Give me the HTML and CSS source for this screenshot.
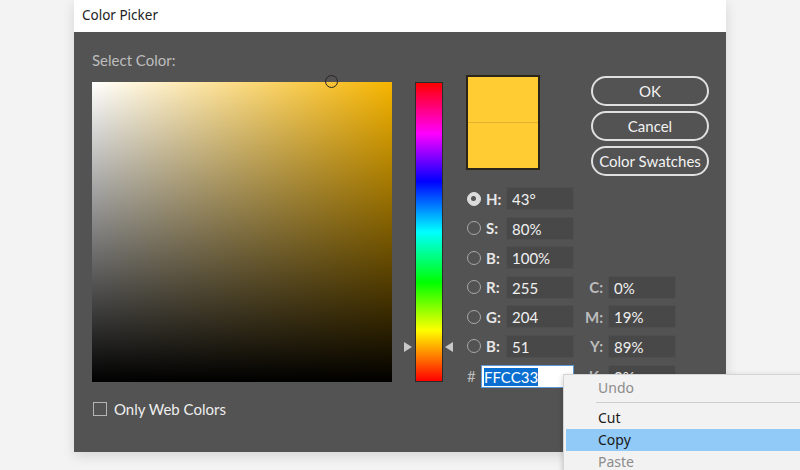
FILE: index.html
```html
<!DOCTYPE html>
<html lang="en">
<head>
    <meta charset="UTF-8">
    <title>Color Picker</title>
    <link rel="stylesheet" href="styles.css">
</head>
<body>
    <div class="dialog">
        <div class="title-bar">Color Picker</div>
        <div class="dialog-body">
            <div class="picker-col">
                <div class="section-label">Select Color:</div>
                <div class="sv-box">
                    <span class="sv-marker"></span>
                </div>
                <label class="web-only">
                    <span class="check"></span>
                    Only Web Colors
                </label>
            </div>
            <div class="hue-col">
                <div class="hue-bar"></div>
                <span class="hue-arrow left"></span>
                <span class="hue-arrow right"></span>
            </div>
            <div class="values-col">
                <div class="top-row">
                    <div class="swatch">
                        <div class="swatch-new"></div>
                        <div class="swatch-old"></div>
                    </div>
                    <div class="button-col">
                        <button class="btn">OK</button>
                        <button class="btn">Cancel</button>
                        <button class="btn">Color Swatches</button>
                    </div>
                </div>
                <div class="fields">
                    <span class="radio checked"></span><span class="field-label">H:</span><span class="field">43°</span><span></span><span></span>
                    <span class="radio"></span><span class="field-label">S:</span><span class="field">80%</span><span></span><span></span>
                    <span class="radio"></span><span class="field-label">B:</span><span class="field">100%</span><span></span><span></span>
                    <span class="radio"></span><span class="field-label">R:</span><span class="field">255</span><span class="cmyk-label">C:</span><span class="field">0%</span>
                    <span class="radio"></span><span class="field-label">G:</span><span class="field">204</span><span class="cmyk-label">M:</span><span class="field">19%</span>
                    <span class="radio"></span><span class="field-label">B:</span><span class="field">51</span><span class="cmyk-label">Y:</span><span class="field">89%</span>
                    <span class="hash">#</span><span class="field hex"><span class="selected">FFCC33</span></span><span class="cmyk-label">K:</span><span class="field">0%</span>
                </div>
            </div>
        </div>
    </div>

    <ul class="context-menu">
        <li class="disabled">Undo</li>
        <li class="separator"></li>
        <li>Cut</li>
        <li class="active">Copy</li>
        <li class="disabled">Paste</li>
    </ul>
</body>
</html>
```

FILE: styles.css
```css
*{
    box-sizing: border-box;
}
body{
    margin: 0;
    height: 470px;
    overflow: hidden;
    position: relative;
    background: #f3f3f3;
    font-family: Lato, "Open Sans", sans-serif;
    font-size: 15px;
}
.dialog{
    width: 652px;
    margin-left: 74px;
    box-shadow: 0 4px 12px rgba(0, 0, 0, 0.12);
}
.title-bar{
    height: 32px;
    line-height: 30px;
    padding-left: 8px;
    background: #fff;
    color: #222;
    font-family: "Noto Sans", sans-serif;
    font-size: 13.5px;
}
.dialog-body{
    display: flex;
    height: 420px;
    padding: 19px 18px 0;
    background: #535353;
    color: #e6e6e6;
}
.section-label{
    height: 18px;
    line-height: 18px;
    margin-bottom: 13px;
    color: #bdbdbd;
}
.sv-box{
    position: relative;
    width: 300px;
    height: 300px;
    background:
        linear-gradient(to top, #000, rgba(0, 0, 0, 0)),
        linear-gradient(to right, #fff, #f7b500);
}
.sv-marker{
    position: absolute;
    left: 233px;
    top: -7px;
    width: 13px;
    height: 13px;
    border: 1.5px solid #2a2420;
    border-radius: 50%;
}
.web-only{
    display: flex;
    align-items: center;
    gap: 7px;
    margin-top: 18px;
    margin-left: 1px;
    color: #eee;
}
.check{
    width: 14px;
    height: 14px;
    border: 1px solid #b5b5b5;
}
.hue-col{
    position: relative;
    margin-left: 23px;
    margin-top: 31px;
}
.hue-bar{
    width: 28px;
    height: 300px;
    border: 1px solid #2b2b2b;
    background: linear-gradient(to bottom,
        #ff0000 0%, #ff00ff 17%, #0000ff 33%, #00ffff 50%,
        #00ff00 67%, #ffff00 83%, #ff0000 100%);
}
.hue-arrow{
    position: absolute;
    top: 260px;
    width: 0;
    height: 0;
    border-top: 5px solid transparent;
    border-bottom: 5px solid transparent;
}
.hue-arrow.left{
    left: -11px;
    border-left: 8px solid #c8c8c8;
}
.hue-arrow.right{
    right: -10px;
    border-right: 8px solid #c8c8c8;
}
.values-col{
    margin-left: 23px;
    margin-top: 24px;
}
.top-row{
    display: flex;
    align-items: flex-start;
    height: 95px;
}
.swatch{
    width: 74px;
    height: 95px;
    border: 2px solid #2b2418;
    background: #ffcc33;
    display: flex;
    flex-direction: column;
}
.swatch-new,
.swatch-old{
    flex: 1;
}
.swatch-new{
    border-bottom: 1px solid #e0b230;
}
.button-col{
    display: flex;
    flex-direction: column;
    gap: 5px;
    margin-left: 51px;
    margin-top: 1px;
}
.btn{
    width: 118px;
    height: 30px;
    padding: 0;
    border: 2px solid #e0e0e0;
    border-radius: 15px;
    background: transparent;
    color: #f2f2f2;
    font-family: inherit;
    font-size: 15px;
}
.fields{
    display: grid;
    grid-template-columns: 18px 22px 68px 34px 68px;
    grid-auto-rows: 23px;
    row-gap: 6.6px;
    align-items: center;
    margin-top: 17px;
}
.radio{
    width: 14px;
    height: 14px;
    margin-left: 1px;
    border: 1.5px solid #a8a8a8;
    border-radius: 50%;
}
.radio.checked{
    background: #dcdcdc;
    border-color: #dcdcdc;
    position: relative;
}
.radio.checked::after{
    content: "";
    position: absolute;
    left: 3px;
    top: 3px;
    width: 5px;
    height: 5px;
    border-radius: 50%;
    background: #555;
}
.field-label{
    padding-left: 2px;
    color: #e8e8e8;
    font-weight: bold;
}
.cmyk-label{
    text-align: right;
    padding-right: 5px;
    color: #bdbdbd;
    font-weight: bold;
}
.field{
    height: 23px;
    line-height: 22px;
    padding-left: 5px;
    background: #484848;
    border: 1px solid #4f4f4f;
    color: #f0f0f0;
}
.hash{
    color: #bdbdbd;
    padding-left: 1px;
}
.field.hex{
    grid-column: 2 / 4;
    margin-left: -3px;
    padding-left: 2px;
    background: #fff;
    border-color: #5a9ad8;
}
.selected{
    background: #0a6fd0;
    color: #fff;
}
.context-menu{
    position: absolute;
    left: 563px;
    top: 374px;
    width: 250px;
    margin: 0;
    padding: 2px 2px 0;
    list-style: none;
    background: #f2f2f2;
    border: 1px solid #d4d4d4;
    box-shadow: 0 2px 6px rgba(0, 0, 0, 0.2);
    color: #1a1a1a;
    font-family: "Noto Sans", sans-serif;
    font-size: 14px;
}
.context-menu li{
    height: 22px;
    line-height: 22px;
    padding-left: 32px;
}
.context-menu .separator{
    height: 1px;
    margin: 3px 0 4px 30px;
    padding: 0;
    background: #cfcfcf;
}
.context-menu .disabled{
    color: #8c8c8c;
}
.context-menu .active{
    background: #91c9f7;
}
```
